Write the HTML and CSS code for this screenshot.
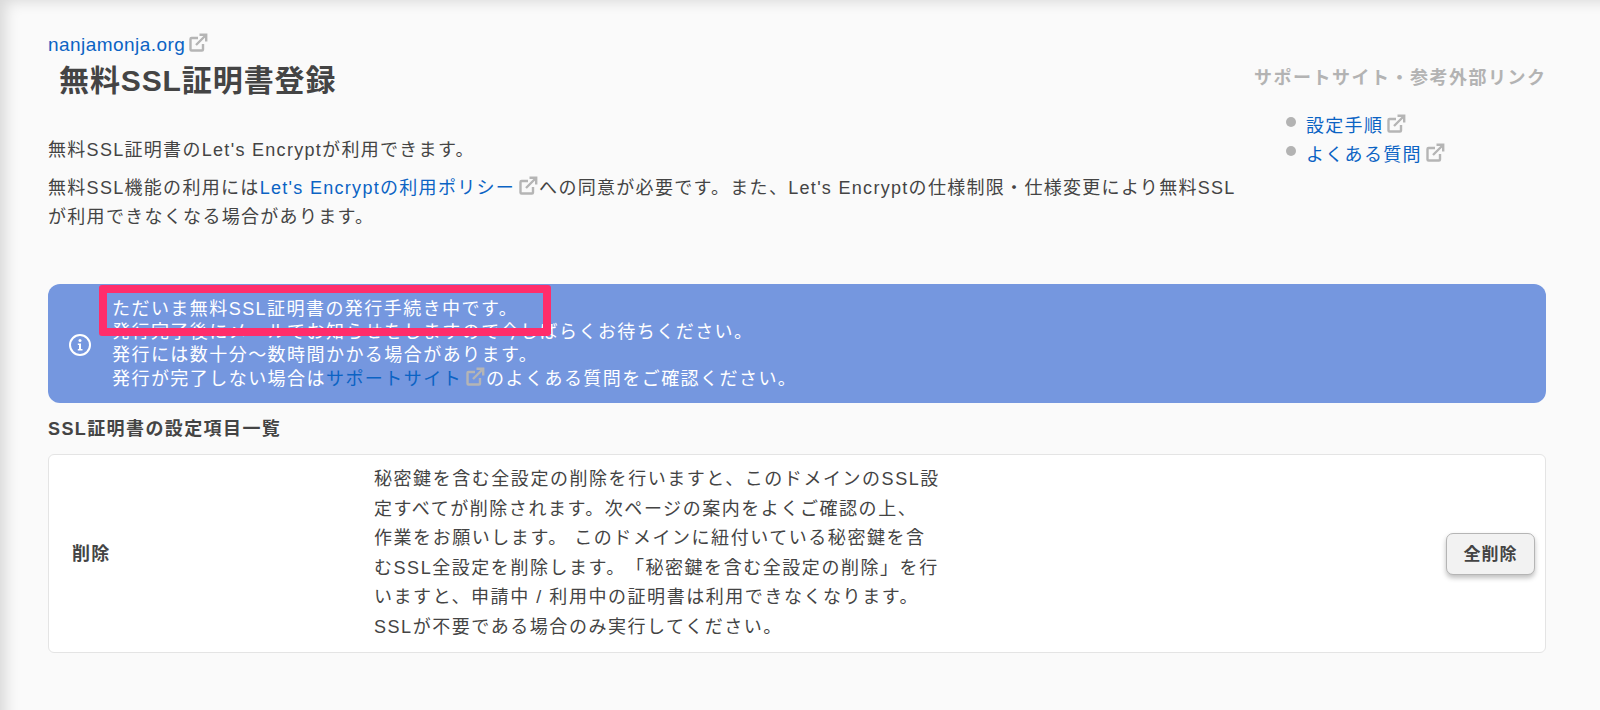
FILE: index.html
```html
<!DOCTYPE html>
<html lang="ja">
<head>
    <meta charset="UTF-8">
    <title>無料SSL証明書登録</title>
    <link rel="stylesheet" href="styles.css">
</head>
<body>
    <svg class="icon-defs" width="0" height="0">
        <symbol id="ext" viewBox="0 0 20 20">
            <path d="M15 11v5.500a1 1 0 0 1-1 1H3.500a1 1 0 0 1-1-1V6a1 1 0 0 1 1-1H10" fill="none" stroke="currentColor" stroke-width="2.400"/>
            <path d="M8 12 17 3M11.500 1.800H18.200V8.500" fill="none" stroke="currentColor" stroke-width="2.400"/>
        </symbol>
    </svg>
    <div class="page">
        <div class="top">
            <div class="intro">
                <a class="link site-link" href="#">nanjamonja.org<svg class="ext"><use href="#ext"/></svg></a>
                <h1>無料SSL証明書登録</h1>
                <p class="lead">無料SSL証明書のLet's Encryptが利用できます。</p>
                <p class="lead">無料SSL機能の利用には<a class="link" href="#">Let's Encryptの利用ポリシー<svg class="ext"><use href="#ext"/></svg></a>への同意が必要です。また、Let's Encryptの仕様制限・仕様変更により無料SSLが利用できなくなる場合があります。</p>
            </div>
            <aside class="side">
                <h2>サポートサイト・参考外部リンク</h2>
                <ul>
                    <li><a class="link" href="#">設定手順<svg class="ext"><use href="#ext"/></svg></a></li>
                    <li><a class="link" href="#">よくある質問<svg class="ext"><use href="#ext"/></svg></a></li>
                </ul>
            </aside>
        </div>

        <div class="alert">
            <svg class="alert-icon" viewBox="0 0 24 24">
                <circle cx="12" cy="12" r="10" fill="none" stroke="currentColor" stroke-width="2"/>
                <circle cx="12" cy="7.500" r="1.500" fill="currentColor"/>
                <path d="M9.800 10.500H13V16H14.500V17.500H9.800V16H11V12H9.800Z" fill="currentColor"/>
            </svg>
            <div class="alert-text">
                <div>ただいま無料SSL証明書の発行手続き中です。</div>
                <div>発行完了後にメールでお知らせをしますので今しばらくお待ちください。</div>
                <div>発行には数十分〜数時間かかる場合があります。</div>
                <div>発行が完了しない場合は<a class="link" href="#">サポートサイト<svg class="ext"><use href="#ext"/></svg></a>のよくある質問をご確認ください。</div>
            </div>
            <div class="highlight"></div>
        </div>

        <h3>SSL証明書の設定項目一覧</h3>
        <div class="card">
            <div class="card-label">削除</div>
            <div class="card-desc">秘密鍵を含む全設定の削除を行いますと、このドメインのSSL設<br>定すべてが削除されます。次ページの案内をよくご確認の上、<br>作業をお願いします。 このドメインに紐付いている秘密鍵を含<br>むSSL全設定を削除します。「秘密鍵を含む全設定の削除」を行<br>いますと、申請中 / 利用中の証明書は利用できなくなります。<br>SSLが不要である場合のみ実行してください。</div>
            <button class="btn" type="button">全削除</button>
        </div>
    </div>
</body>
</html>
```

FILE: styles.css
```css
* {
    margin: 0;
    padding: 0;
    box-sizing: border-box;
}

body {
    height: 710px;
    overflow: hidden;
    background: #fafafa;
    color: #444;
    font-family: "Liberation Sans", "Noto Sans CJK JP", sans-serif;
    font-size: 18px;
    letter-spacing: 1.300px;
    text-spacing-trim: space-all;
    box-shadow: inset 14px 10px 14px -8px rgba(0, 0, 0, 0.13);
}

.icon-defs {
    display: block;
}

.page {
    padding: 33px 54px 0 48px;
}

.link {
    color: #0b63c4;
    text-decoration: none;
}

.ext {
    width: 20px;
    height: 20px;
    margin: 0 1px 0 3px;
    vertical-align: -2px;
    color: #b5b5b5;
}

.top {
    display: flex;
    justify-content: space-between;
    height: 251px;
}

.intro {
    width: 1192px;
}

.site-link {
    display: block;
    font-size: 19px;
    letter-spacing: 0.450px;
    line-height: 24px;
}

h1 {
    margin: 3px 0 34px 11px;
    font-size: 30px;
    line-height: 42px;
    letter-spacing: 0.900px;
    color: #444;
}

.lead {
    line-height: 29px;
    margin-bottom: 9px;
}

.side {
    width: 292px;
    padding-top: 32px;
}

.side h2 {
    font-size: 18px;
    line-height: 26px;
    letter-spacing: 1.500px;
    color: #b3b3b3;
    white-space: nowrap;
}

.side ul {
    margin: 21px 0 0 32px;
    list-style: none;
}

.side li {
    position: relative;
    padding-left: 20px;
    line-height: 29px;
}

.side li:before {
    content: '';
    position: absolute;
    left: 0;
    top: 5px;
    width: 10px;
    height: 10px;
    border-radius: 50%;
    background: #b3b3b3;
}

.alert {
    position: relative;
    display: flex;
    align-items: center;
    height: 119px;
    padding: 8px 0 6px 20px;
    border-radius: 12px;
    background: #7597df;
    color: #fff;
}

.alert-icon {
    width: 24px;
    height: 24px;
    margin-right: 20px;
    flex-shrink: 0;
}

.alert-text {
    line-height: 23px;
    letter-spacing: 1.450px;
}

.highlight {
    position: absolute;
    left: 51px;
    top: 1px;
    width: 452px;
    height: 51px;
    border: 8px solid #ff2d6b;
    border-radius: 3px;
}

h3 {
    margin: 14px 0 13px;
    font-size: 18px;
    line-height: 24px;
    letter-spacing: 1.400px;
}

.card {
    display: flex;
    align-items: center;
    height: 199px;
    padding: 0 10px 0 23px;
    border: 1px solid #e4e4e4;
    border-radius: 6px;
    background: #fff;
}

.card-label {
    width: 302px;
    padding-bottom: 4px;
    font-weight: bold;
}

.card-desc {
    width: 580px;
    line-height: 29.500px;
    letter-spacing: 1.550px;
    white-space: nowrap;
}

.btn {
    margin-left: auto;
    width: 89px;
    height: 42px;
    padding-bottom: 3px;
    border: 1px solid #b5b5b5;
    border-radius: 7px;
    background: #f2f2f2;
    color: #444;
    font-family: inherit;
    font-size: 17px;
    letter-spacing: 1px;
    font-weight: bold;
    box-shadow: 0 3px 5px rgba(0, 0, 0, 0.25);
}
```
